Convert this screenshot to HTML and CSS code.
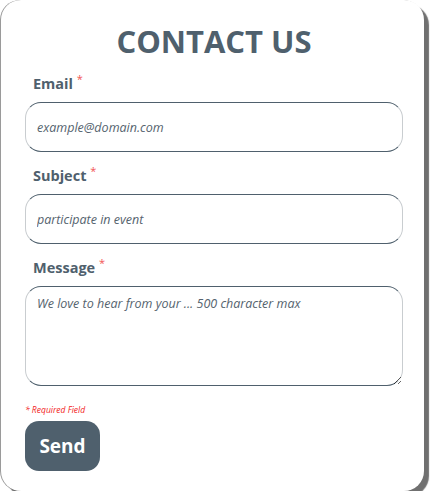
FILE: index.html
```html
<!DOCTYPE html>
<html lang="en">
<head>
    <meta charset="UTF-8">
    <meta name="viewport" content="width=device-width, initial-scale=1.0">
    <title>Contact Us</title>
    <link rel="stylesheet" href="styles.css">
</head>
<body>
<div class="card">
    <h1>CONTACT US</h1>
    <form id="contactForm">
        <label for="email">Email <span class="req">*</span></label>
        <input type="email" id="email" placeholder="example@domain.com" required>
        <label for="subject">Subject <span class="req">*</span></label>
        <input type="text" id="subject" placeholder="participate in event" required>
        <label for="message">Message <span class="req">*</span></label>
        <textarea id="message" maxlength="500" placeholder="We love to hear from your ... 500 character max" required></textarea>
        <p class="note">* Required Field</p>
        <button type="button">Send</button>
    </form>
</div>
</body>
</html>
```

FILE: styles.css
```css
body {
    font-family: 'Open Sans', sans-serif;
    margin: 0;
    background-color: #fff;
    color: #4f606d;
}
.card {
    width: 423px;
    height: 491px;
    box-sizing: border-box;
    margin-left: 1px;
    padding: 22px 21px 0 24px;
    background-color: #fff;
    border-radius: 20px;
    box-shadow: 5px 5px 1px #707070, -1px 0 0 #9a9a9a;
}
h1 {
    margin: 0 0 14px;
    text-align: center;
    font-size: 31px;
    line-height: 38px;
    font-weight: 700;
}
form {
    display: flex;
    flex-direction: column;
    align-items: flex-start;
}
label {
    display: block;
    height: 20px;
    font-weight: 700;
    font-size: 14.5px;
    line-height: 20px;
    margin: 0 0 8px 8px;
}
.req {
    position: relative;
    top: -6px;
    color: #f25555;
    font-size: 11px;
    font-weight: 400;
    line-height: 0;
}
input, textarea {
    display: block;
    width: 378px;
    box-sizing: border-box;
    border: 1px solid #4f606d;
    border-left-color: #c9cdd0;
    border-right-color: #c9cdd0;
    border-radius: 16px;
    padding: 0 11px;
    font-family: inherit;
    font-size: 12.5px;
    font-style: italic;
    color: #4f606d;
    margin: 0 0 14px;
}
input {
    height: 50px;
}
textarea {
    height: 100px;
    padding-top: 8px;
    resize: vertical;
    margin-bottom: 18px;
}
::placeholder {
    color: #55636e;
    opacity: 1;
}
.note {
    margin: 0 0 6px;
    height: 11px;
    line-height: 11px;
    color: #f21a1a;
    font-size: 8.5px;
    font-style: italic;
}
button {
    background-color: #4f606d;
    color: #fff;
    font-family: inherit;
    font-size: 19px;
    font-weight: 700;
    width: 75px;
    height: 50px;
    border: none;
    border-radius: 14px;
    cursor: pointer;
}
```
